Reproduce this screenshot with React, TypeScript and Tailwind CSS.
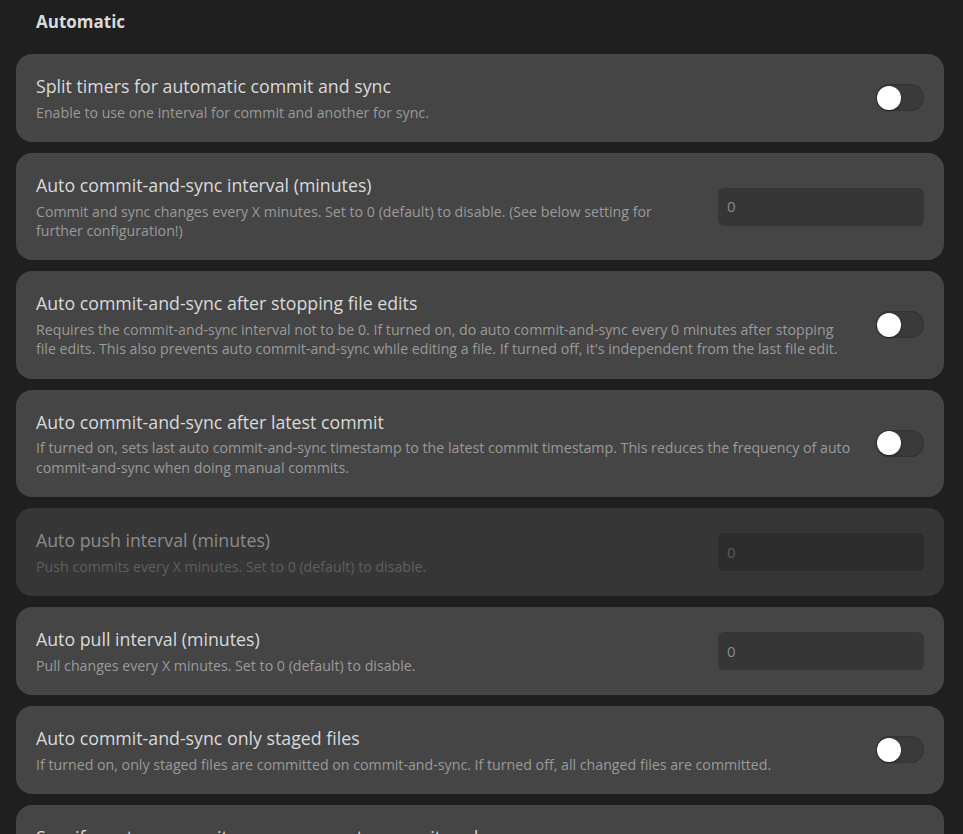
import React from "react";

type Item = {
  name: string;
  desc: string;
  control: "toggle" | "input";
  disabled?: boolean;
};

const items: Item[] = [
  {
    name: "Split timers for automatic commit and sync",
    desc: "Enable to use one interval for commit and another for sync.",
    control: "toggle",
  },
  {
    name: "Auto commit-and-sync interval (minutes)",
    desc: "Commit and sync changes every X minutes. Set to 0 (default) to disable. (See below setting for further configuration!)",
    control: "input",
  },
  {
    name: "Auto commit-and-sync after stopping file edits",
    desc: "Requires the commit-and-sync interval not to be 0. If turned on, do auto commit-and-sync every 0 minutes after stopping file edits. This also prevents auto commit-and-sync while editing a file. If turned off, it's independent from the last file edit.",
    control: "toggle",
  },
  {
    name: "Auto commit-and-sync after latest commit",
    desc: "If turned on, sets last auto commit-and-sync timestamp to the latest commit timestamp. This reduces the frequency of auto commit-and-sync when doing manual commits.",
    control: "toggle",
  },
  {
    name: "Auto push interval (minutes)",
    desc: "Push commits every X minutes. Set to 0 (default) to disable.",
    control: "input",
    disabled: true,
  },
  {
    name: "Auto pull interval (minutes)",
    desc: "Pull changes every X minutes. Set to 0 (default) to disable.",
    control: "input",
  },
  {
    name: "Auto commit-and-sync only staged files",
    desc: "If turned on, only staged files are committed on commit-and-sync. If turned off, all changed files are committed.",
    control: "toggle",
  },
  {
    name: "Specify custom commit message on auto commit-and-sync",
    desc: "You will get a pop up to specify your message.",
    control: "toggle",
  },
];

function Toggle() {
  return (
    <div className="flex h-[27px] w-[48px] shrink-0 items-center rounded-full bg-[#3a3a3a] px-[1px] shadow-[inset_0_0_2px_rgba(0,0,0,0.35)]">
      <div className="h-[24px] w-[24px] rounded-full bg-white shadow-[0_1px_2px_rgba(0,0,0,0.4)]" />
    </div>
  );
}

function NumberInput({ disabled }: { disabled?: boolean }) {
  return (
    <div
      className={
        disabled
          ? "flex h-[38px] w-[206px] shrink-0 items-center rounded-md bg-[#2c2c2c] px-[9px] text-[15px] text-[#5a5a5a]"
          : "flex h-[38px] w-[206px] shrink-0 items-center rounded-md bg-[#363636] px-[9px] text-[15px] text-[#8a8a8a]"
      }
    >
      0
    </div>
  );
}

function SettingRow({ item }: { item: Item }) {
  return (
    <div
      className={
        item.disabled
          ? "flex items-center gap-5 rounded-[16px] bg-[#363636] px-5 py-5"
          : "flex items-center gap-5 rounded-[16px] bg-[#454545] px-5 py-5"
      }
    >
      <div className="min-w-0 flex-1">
        <div
          className={
            item.disabled
              ? "mb-[4.67px] text-[17.75px] leading-[24px] text-[#8c8c8c]"
              : "mb-[4.67px] text-[17.75px] leading-[24px] text-[#dadada]"
          }
        >
          {item.name}
        </div>
        <div
          className={
            item.disabled
              ? "text-[14.2px] leading-[19.33px] text-[#5e5e5e]"
              : "text-[14.2px] leading-[19.33px] text-[#9a9a9a]"
          }
        >
          {item.desc}
        </div>
      </div>
      {item.control === "toggle" ? (
        <Toggle />
      ) : (
        <NumberInput disabled={item.disabled} />
      )}
    </div>
  );
}

export default function App() {
  return (
    <div
      className="h-[834px] overflow-hidden bg-[#1f1f1f] pl-4 pr-[19px]"
      style={{ fontFamily: '"Open Sans", "Noto Sans", sans-serif' }}
    >
      <div className="pl-5 pt-[9px] pb-[19px] text-[17px] font-bold leading-[26px] text-[#dadada]">
        Automatic
      </div>
      <div className="flex flex-col gap-[11px]">
        {items.map((it) => (
          <SettingRow key={it.name} item={it} />
        ))}
      </div>
    </div>
  );
}
